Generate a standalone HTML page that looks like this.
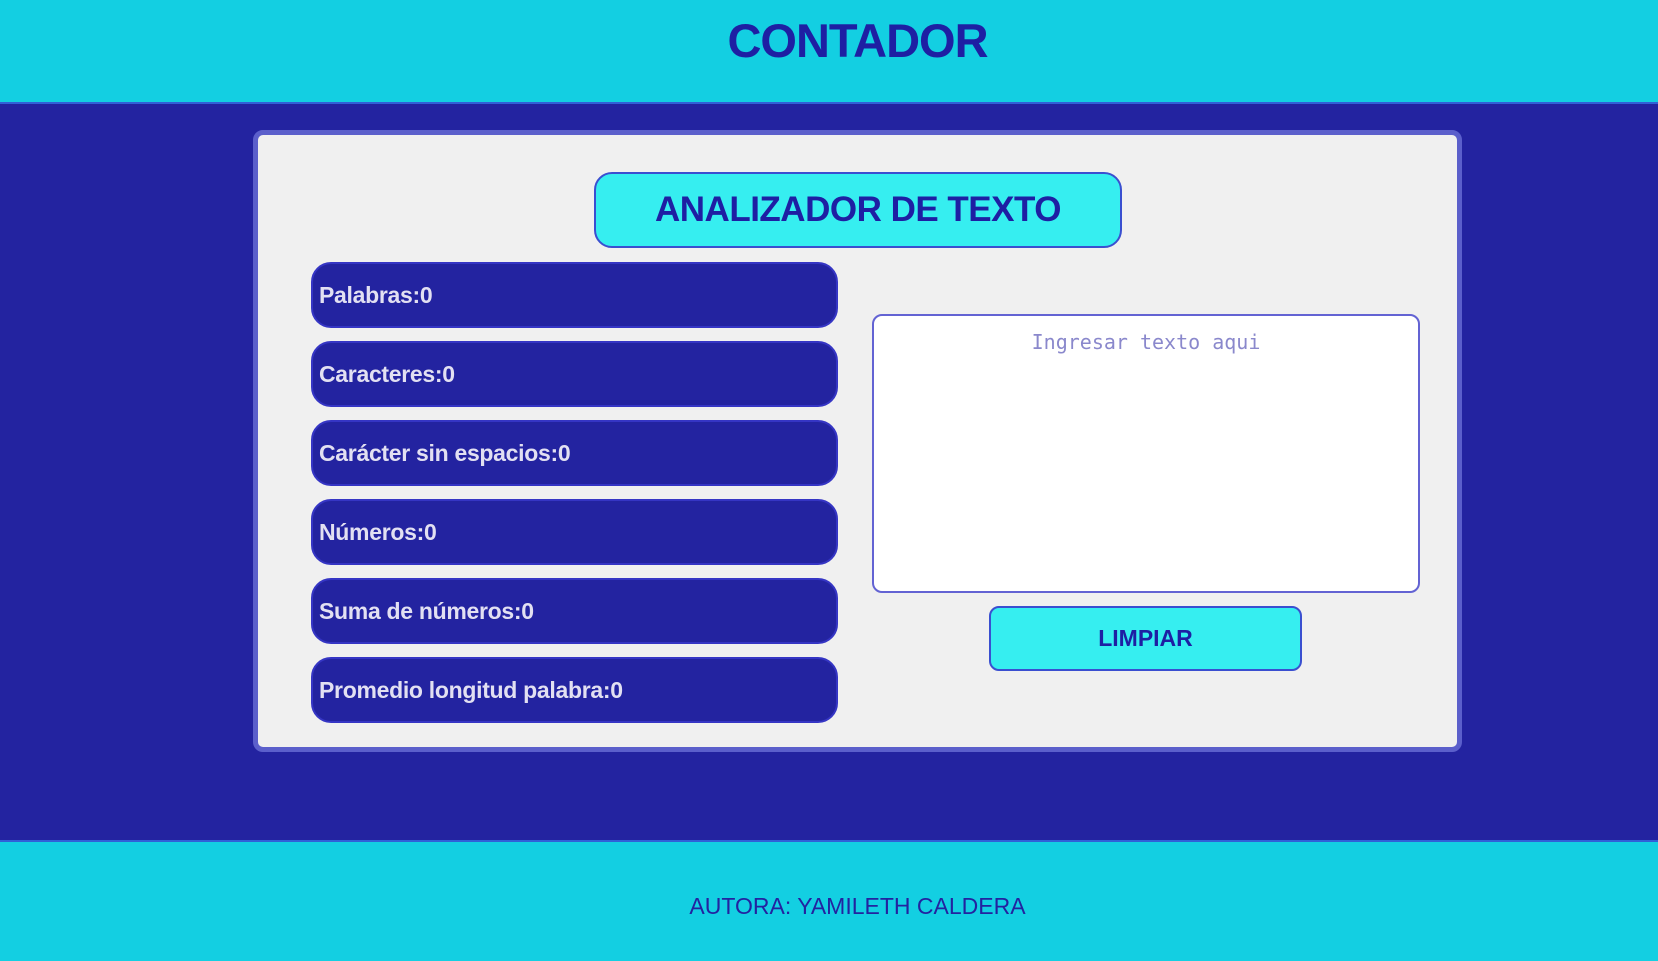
<!DOCTYPE html>
<html><head><meta charset="utf-8"><style>
*{box-sizing:border-box;margin:0;padding:0}
html,body{width:1658px;height:961px;overflow:hidden}
body{background:#2323a0;font-family:"Liberation Sans",Arial,sans-serif;position:relative}
.hdr{position:absolute;left:0;top:0;width:1658px;height:104px;background:#13cfe2;border-bottom:2px solid #3060d8;overflow:hidden}
.hdr h1{position:absolute;left:0;width:1715px;top:11px;text-align:center;color:#1e1fa3;font-size:47px;font-weight:bold;letter-spacing:-1px;line-height:60px}
.card{position:absolute;left:253px;top:130px;width:1209px;height:622px;background:#f0f0f0;border:5px solid #5b5fcb;border-radius:10px}
.title{position:absolute;left:594px;top:172px;width:528px;height:76px;background:#36eef0;border:2px solid #3a4fd0;border-radius:18px;text-align:center;line-height:72px;color:#1e1fa3;font-size:35px;font-weight:bold;letter-spacing:-0.5px}
.stat{position:absolute;left:311px;width:527px;height:66px;background:#2323a0;border:2px solid #3535c4;border-radius:20px;color:#e2e0f2;font-size:23px;font-weight:bold;line-height:62px;padding-left:6px;letter-spacing:-0.3px}
.ta{position:absolute;left:872px;top:314px;width:548px;height:279px;background:#fff;border:2px solid #6363d3;border-radius:10px;text-align:center;font-family:"DejaVu Sans Mono","Liberation Mono",monospace;font-size:20px;color:#8a88cc;padding-top:14px}
.btn{position:absolute;left:989px;top:606px;width:313px;height:65px;background:#36eef0;border:2px solid #3a4fd0;border-radius:10px;text-align:center;line-height:61px;color:#1e1fa3;font-size:23px;font-weight:bold}
.ftr{position:absolute;left:0;top:840px;width:1658px;height:121px;background:#13cfe2;border-top:2px solid #3060d8;overflow:hidden}
.ftr p{position:absolute;left:0;width:1715px;top:50px;text-align:center;color:#2323a0;font-size:23px;line-height:28px}
</style></head><body>
<div class="hdr"><h1>CONTADOR</h1></div>
<div class="card"></div>
<div class="title">ANALIZADOR DE TEXTO</div>
<div class="stat" style="top:262px">Palabras:0</div>
<div class="stat" style="top:341px">Caracteres:0</div>
<div class="stat" style="top:420px">Carácter sin espacios:0</div>
<div class="stat" style="top:499px">Números:0</div>
<div class="stat" style="top:578px">Suma de números:0</div>
<div class="stat" style="top:657px">Promedio longitud palabra:0</div>
<div class="ta">Ingresar texto aqui</div>
<div class="btn">LIMPIAR</div>
<div class="ftr"><p>AUTORA: YAMILETH CALDERA</p></div>
</body></html>
